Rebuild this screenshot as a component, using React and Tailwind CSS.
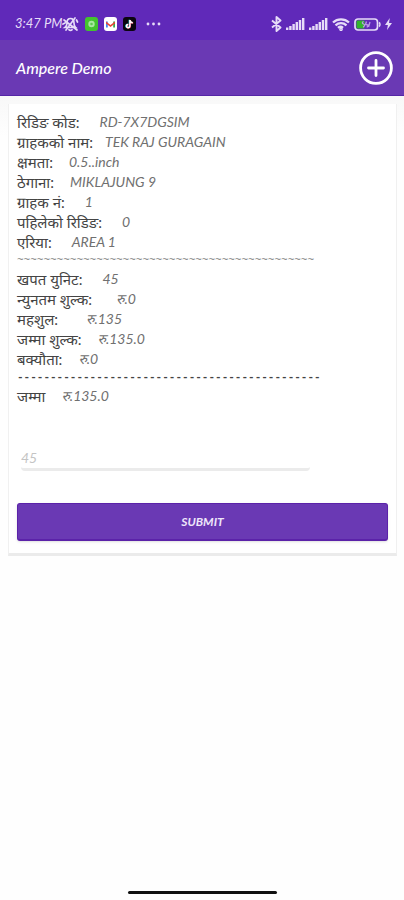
import { useState } from "react";

const details = [
  { label: "रिडिङ कोड:", value: "RD-7X7DGSIM", gap: "gap-5" },
  { label: "ग्राहकको नाम:", value: "TEK RAJ GURAGAIN", gap: "gap-3" },
  { label: "क्षमता:", value: "0.5..inch", gap: "gap-4" },
  { label: "ठेगाना:", value: "MIKLAJUNG 9", gap: "gap-4" },
  { label: "ग्राहक नं:", value: "1", gap: "gap-5" },
  { label: "पहिलेको रिडिङ:", value: "0", gap: "gap-5" },
  { label: "एरिया:", value: "AREA 1", gap: "gap-5" },
];

const charges = [
  { label: "खपत युनिट:", value: "45", gap: "gap-5" },
  { label: "न्युनतम शुल्क:", value: "रु.0", gap: "gap-6" },
  { label: "महशुल:", value: "रु.135", gap: "gap-7" },
  { label: "जम्मा शुल्क:", value: "रु.135.0", gap: "gap-4" },
  { label: "बक्यौता:", value: "रु.0", gap: "gap-4" },
];

function Row({ label, value, gap }) {
  return (
    <div className={`flex ${gap} h-5 items-center whitespace-nowrap leading-5`}>
      <dt className="text-[15px]">{label}</dt>
      <dd className="text-sm italic text-[#707070]">{value}</dd>
    </div>
  );
}

function Divider({ char, count, tone }) {
  return (
    <div className={`h-[17px] overflow-hidden whitespace-nowrap font-['Liberation_Mono',monospace] text-[11px] leading-[17px] ${tone}`} aria-hidden="true">
      {char.repeat(count)}
    </div>
  );
}

function Signal() {
  return (
    <svg width="19" height="12" viewBox="0 0 19 12" fill="#e6dcf8">
      <rect x="0" y="9.5" width="2.4" height="2.5" />
      <rect x="3.2" y="8" width="2.4" height="4" />
      <rect x="6.4" y="6" width="2.4" height="6" />
      <rect x="9.6" y="4" width="2.4" height="8" />
      <rect x="12.8" y="2" width="2.4" height="10" />
      <rect x="16" y="0" width="2.4" height="12" />
    </svg>
  );
}

function StatusBar() {
  return (
    <div className="flex h-10 items-center justify-between bg-[#6029b9] pl-[15px] pr-3 pt-2 text-[#e6dcf8]">
      <div className="flex items-center">
        <span className="whitespace-nowrap text-[13px] italic">3:47 PM</span>
        <svg className="mr-[6px]" width="17" height="16" viewBox="0 0 17 16" fill="none" stroke="#e6dcf8" strokeWidth="1.7" strokeLinecap="round">
          <path d="M3 11.5h10.5c-1.2-1-1.5-2.4-1.5-4.5 0-2.700-1.500-4.500-3.500-4.500S5 4.300 5 7c0 2.100-.6 3.500-2 4.500zM7 13.700c.7 1 2.300 1 3 0M2 4l13 10M1 8l2-1M14.500 4l1 2" />
          <path d="M4 14 13 2" />
        </svg>
        <svg className="mr-[6px]" width="13" height="14" viewBox="0 0 13 14">
          <rect width="13" height="14" rx="3" fill="#43c32f" />
          <circle cx="6.500" cy="7" r="3.200" fill="#a8e6a0" />
          <circle cx="6.500" cy="7" r="1.300" fill="#5fc952" />
        </svg>
        <svg className="mr-[6px]" width="13" height="14" viewBox="0 0 13 14">
          <rect width="13" height="14" rx="3" fill="#fff" />
          <path d="M2 10.500V4.500h1.800v6z" fill="#4285f4" />
          <path d="M9.200 10.500v-6H11v6z" fill="#34a853" />
          <path d="M2 4.500 6.500 8 11 4.500v2L6.500 10 2 6.500z" fill="#ea4335" />
        </svg>
        <svg className="mr-[10px]" width="13" height="14" viewBox="0 0 13 14" fill="none" strokeWidth="1.500">
          <rect width="13" height="14" rx="3" fill="#0b0510" />
          <path d="M6.400 2.800v6.100a1.700 1.700 0 1 1-1.700-1.700M6.400 3c.2 1.600 1.300 2.500 2.900 2.600" stroke="#25f4ee" />
          <path d="M7.300 3.200v6.100a1.700 1.700 0 1 1-1.700-1.700M7.300 3.400c.2 1.600 1.300 2.500 2.900 2.600" stroke="#fe2c55" />
          <path d="M6.900 3v6.100a1.700 1.700 0 1 1-1.700-1.700M6.900 3.200c.2 1.600 1.300 2.500 2.900 2.600" stroke="#fff" />
        </svg>
        <svg width="15" height="4" viewBox="0 0 15 4" fill="#e6dcf8">
          <circle cx="2" cy="2" r="1.400" />
          <circle cx="7.500" cy="2" r="1.400" />
          <circle cx="13" cy="2" r="1.400" />
        </svg>
      </div>
      <div className="flex items-center gap-1">
        <svg width="11" height="16" viewBox="0 0 11 16" fill="none" stroke="#e6dcf8" strokeWidth="1.900" strokeLinejoin="round">
          <path d="M1 4.500 9.500 11.500 5.500 15V1l4 3.500L1 11.500" />
        </svg>
        <Signal />
        <Signal />
        <svg width="18" height="13" viewBox="0 0 18 13" fill="none" stroke="#e6dcf8" strokeWidth="2.300">
          <path d="M1 4.500C5.500.3 12.500.3 17 4.500M3.500 7.300c3.200-2.900 7.800-2.900 11 0M6 9.900c1.600-1.400 3.400-1.400 5 0" />
          <circle cx="9" cy="11.300" r="0.700" />
        </svg>
        <svg width="27" height="13" viewBox="0 0 27 13" fill="none">
          <rect x="1" y="1" width="22.500" height="11" rx="3" stroke="#e6dcf8" strokeWidth="1.700" />
          <path d="M25 4.500c1.300.8 1.300 3.200 0 4" stroke="#e6dcf8" strokeWidth="1.500" />
          <rect x="2.500" y="2.500" width="8" height="8" rx="1" fill="#31b52b" />
          <path d="M9.500 3.500c-1.500.5-1.500 2 0 2.500s1.500 2.500-.5 3M12.500 3.500l-1 3 2.500.5-1 2.500M16 4l-1.500 5" stroke="#b79be4" strokeWidth="1.300" />
        </svg>
        <svg width="7" height="12" viewBox="0 0 7 12" fill="#e6dcf8">
          <path d="M4.800 0 0 7h2.900L2 12l5-7H4z" />
        </svg>
      </div>
    </div>
  );
}

export default function App() {
  const [reading, setReading] = useState("");

  return (
    <div className="flex min-h-screen flex-col bg-[#fefefe] font-[Lato,'Noto_Sans_Devanagari','Noto_Sans',sans-serif] text-[#444]">
      <StatusBar />
      <header className="flex h-14 items-center justify-between border-b border-[#5526a6] bg-[#6a39b4] pl-4 pr-[11px] text-white">
        <h1 className="text-base font-medium italic">Ampere Demo</h1>
        <button type="button" aria-label="Add">
          <svg width="34" height="34" viewBox="0 0 34 34" fill="none" stroke="#fff" strokeWidth="2.800" strokeLinecap="round">
            <circle cx="17" cy="17" r="15.400" />
            <path d="M17 9.500v15M9.500 17h15" />
          </svg>
        </button>
      </header>

      <main className="flex-1 bg-gradient-to-b from-[#f8f8f8] to-[#fefefe] to-5% pl-2 pr-[7px] pt-2">
        <section className="border-x border-b-[3px] border-x-[#f0f0f0] border-b-[#ebebeb] bg-white px-2 pb-3 pt-2">
          <dl>
            {details.map((row) => (
              <Row key={row.label} {...row} />
            ))}
            <Divider char="~" count={45} tone="text-[#777]" />
            {charges.map((row) => (
              <Row key={row.label} {...row} />
            ))}
            <Divider char="-" count={46} tone="font-bold" />
            <Row label="जम्मा" value="रु.135.0" gap="gap-4" />
          </dl>

          <form onSubmit={(e) => e.preventDefault()}>
            <input
              type="text"
              inputMode="numeric"
              aria-label="Reading"
              placeholder="45"
              value={reading}
              onChange={(e) => setReading(e.target.value)}
              className="ml-1 mt-[41px] block h-6 w-[78%] rounded-b-sm border-b-[3px] border-[#ebebeb] text-sm italic outline-none placeholder:text-[#c4c4c4]"
            />
            <button
              type="submit"
              className="mt-8 block h-[38px] w-full rounded-[3px] border border-b-2 border-[#5b22a9] bg-[#6a39b4] text-xs font-bold italic text-[#eee6fa] shadow-sm"
            >
              SUBMIT
            </button>
          </form>
        </section>
      </main>

      <footer className="flex justify-center pb-[6px]">
        <div className="h-[3px] w-[149px] rounded-full bg-[#111]" />
      </footer>
    </div>
  );
}
